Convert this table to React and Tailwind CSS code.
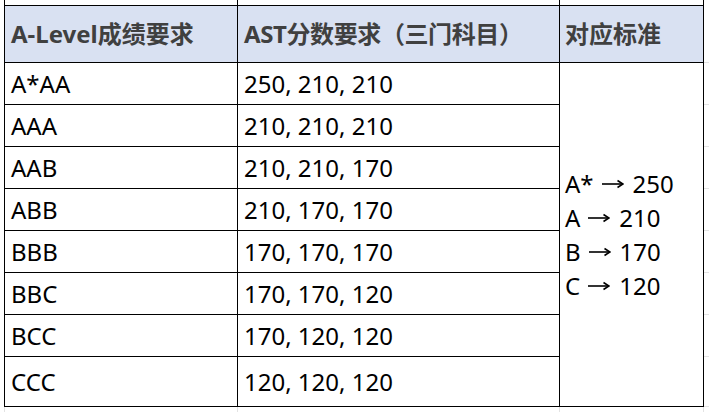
import React from 'react'

const rows = [
  ['A*AA', '250, 210, 210'],
  ['AAA', '210, 210, 210'],
  ['AAB', '210, 210, 170'],
  ['ABB', '210, 170, 170'],
  ['BBB', '170, 170, 170'],
  ['BBC', '170, 170, 120'],
  ['BCC', '170, 120, 120'],
  ['CCC', '120, 120, 120'],
]

const map = [
  ['A*', '250'],
  ['A', '210'],
  ['B', '170'],
  ['C', '120'],
]

const font = { fontFamily: '"Noto Sans", "Noto Sans CJK SC", sans-serif' }

function Arrow() {
  return (
    <svg width="22" height="10" viewBox="0 0 22 10" className="inline-block align-middle relative -top-[2px] ml-[8px] mr-[9px]">
      <line x1="0" y1="5" x2="20" y2="5" stroke="black" strokeWidth="1.6" />
      <path d="M15.5 1.5 L21 5 L15.5 8.5" fill="none" stroke="black" strokeWidth="1.6" />
    </svg>
  )
}

export default function App() {
  return (
    <div className="w-[709px] h-[412px] overflow-hidden bg-white pl-[4px]" style={font}>
      <div className="grid grid-cols-[234px_322px_144px_5px] grid-rows-[6px_57px_42px_42px_42px_42px_42px_42px_42px_50px_10px]">
        {/* cut-off row above the header */}
        <div className="border-l border-r border-b border-black" />
        <div className="border-r border-b border-black" />
        <div className="border-r border-b border-black" />
        <div />

        {/* header */}
        <div className="bg-[#d9e1f2] border-l border-r border-b border-black flex items-center pl-[6px] text-[24px] font-bold text-[#404040]">
          A-Level成绩要求
        </div>
        <div className="bg-[#d9e1f2] border-r border-b border-black flex items-center pl-[6px] text-[24px] font-bold text-[#404040] tracking-[-0.4px]">
          AST分数要求（三门科目）
        </div>
        <div className="bg-[#d9e1f2] border-r border-b border-black flex items-center pl-[5px] text-[24px] font-bold text-[#404040]">
          对应标准
        </div>
        <div className="border-b border-[#e3e3e3]" />

        {rows.map(([grade, score], i) => (
          <React.Fragment key={grade}>
            <div className="border-l border-r border-b border-black flex items-center pl-[6px] text-[24px] text-black">
              {grade}
            </div>
            <div className="border-r border-b border-black flex items-center pl-[6px] text-[24px] text-black">
              {score}
            </div>
            {i === 0 && (
              <div className="row-span-8 border-r border-b border-black flex flex-col justify-center pl-[5px] text-[24px] text-black">
                {map.map(([g, s]) => (
                  <div key={g} className="h-[34px] leading-[34px] whitespace-nowrap">
                    {g}<Arrow />{s}
                  </div>
                ))}
              </div>
            )}
            <div className="border-b border-[#e3e3e3]" />
          </React.Fragment>
        ))}

        {/* empty sheet row below */}
        <div className="border-l border-r border-[#e3e3e3]" />
        <div className="border-r border-[#e3e3e3]" />
        <div className="border-r border-[#e3e3e3]" />
        <div />
      </div>
    </div>
  )
}
